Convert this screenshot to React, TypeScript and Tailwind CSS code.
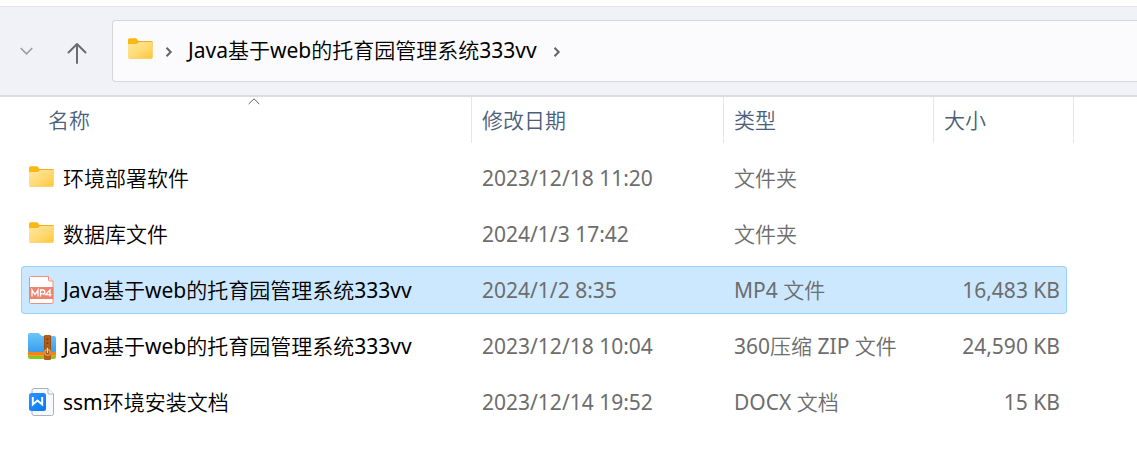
import type { ReactNode } from "react";

type Entry = {
  name: string;
  modified: string;
  type: string;
  size: string;
  icon: ReactNode;
  selected?: boolean;
};

function FolderIcon() {
  return (
    <svg width="26" height="28" viewBox="0 1 26 28" aria-hidden="true" className="shrink-0">
      <defs>
        <linearGradient id="folderFront" x1="0" y1="0" x2="1" y2="1">
          <stop offset="0" stopColor="#ffe69c" />
          <stop offset="0.5" stopColor="#ffdb78" />
          <stop offset="1" stopColor="#ffc637" />
        </linearGradient>
      </defs>
      <path d="M1 5a1.500 1.500 0 0 1 1.500-1.500H9.200L11.500 6H24.600a1.200 1.200 0 0 1 1.200 1.200V12H1Z" fill="#f4ad1f" />
      <path d="M1 5a1.500 1.500 0 0 1 1.500-1.500H9.200L11.200 5.500 9 8.800H1Z" fill="#fcb814" />
      <path d="M1 9h7.700a2.500 2.500 0 0 0 1.800-.8L12 7h13.800v15A1.500 1.500 0 0 1 24.300 23.500H2.500A1.500 1.500 0 0 1 1 22Z" fill="url(#folderFront)" />
      <path d="M1.500 22.900q.4.600 1 .6h21.800q.6 0 1-.6Z" fill="#f5bd3f" />
    </svg>
  );
}

function Mp4Icon() {
  return (
    <svg width="26" height="28" viewBox="0 0 26 28" aria-hidden="true" className="shrink-0">
      <path d="M1.500 1.500a1 1 0 0 1 1-1h18l4.500 4.500v21.500a1 1 0 0 1-1 1h-21.500a1 1 0 0 1-1-1Z" fill="#fff" stroke="#f58e78" />
      <path d="M20.500.5V4a1 1 0 0 0 1 1H25" fill="#ffe5df" stroke="#f58e78" />
      <rect x="1" y="11" width="24.500" height="12" fill="#ef846d" />
      <path
        d="M4 20.500v-6.500l3 4.500 3-4.500v6.500M12.500 20.500v-6.500h2.300a1.900 1.900 0 0 1 0 3.900h-2.300M22 20.500v-6.500l-4.500 4.700h6"
        fill="none"
        stroke="#fff"
        strokeWidth="1.300"
      />
    </svg>
  );
}

function ZipIcon() {
  return (
    <svg width="28" height="28" viewBox="0 0 28 28" aria-hidden="true" className="shrink-0">
      <defs>
        <linearGradient id="zipFront" x1="0" y1="0" x2="0" y2="1">
          <stop offset="0" stopColor="#69c6f8" />
          <stop offset="1" stopColor="#3a9eef" />
        </linearGradient>
      </defs>
      <path d="M0 20h28v4.500a2.500 2.500 0 0 1-2.500 2.500H2.500A2.500 2.500 0 0 1 0 24.500Z" fill="#86c81d" />
      <path d="M0 18h28v4a2 2 0 0 1-2 2H2a2 2 0 0 1-2-2Z" fill="#e8b95a" />
      <path d="M0 17h28v4.500a2 2 0 0 1-2 2H2a2 2 0 0 1-2-2Z" fill="#f58212" />
      <path d="M0 3a2 2 0 0 1 2-2h7.500c1.300 0 1.700.4 2.500 1.300S13.500 4 15 4h11a2 2 0 0 1 2 2v12a2 2 0 0 1-2 2H2a2 2 0 0 1-2-2Z" fill="url(#zipFront)" />
      <rect x="16" y="3" width="7" height="25" rx="1" fill="#b45e18" />
      <path d="M16.500 4v13M22.500 4v13" stroke="#9a4d12" />
      <path d="M19.500 6.500v10" stroke="#74380d" strokeWidth="1.600" strokeDasharray="1.500 2.500" />
      <rect x="17" y="18" width="5" height="5" rx="1" fill="#a55416" stroke="#f3c276" />
      <path d="M19.500 15.500v5.500" stroke="#ffdf9f" strokeWidth="1.200" />
    </svg>
  );
}

function DocIcon() {
  return (
    <svg width="26" height="28" viewBox="0 0 26 28" aria-hidden="true" className="shrink-0">
      <defs>
        <linearGradient id="docBadge" x1="0" y1="0" x2="1" y2="1">
          <stop offset="0" stopColor="#2b95ff" />
          <stop offset="1" stopColor="#0878f4" />
        </linearGradient>
      </defs>
      <path d="M4 2.500a2 2 0 0 1 2-2h14l5.500 5.500v19.500a2 2 0 0 1-2 2H6a2 2 0 0 1-2-2Z" fill="#f8f9fc" stroke="#a9b0bf" />
      <path d="M20 .5V5a1 1 0 0 0 1 1h4.500" fill="#fff" stroke="#a9b0bf" />
      <rect x="1" y="5" width="17" height="18" rx="2.500" fill="url(#docBadge)" />
      <path d="M4.800 9v7.500L9.500 12.500l4.700 4V9" fill="none" stroke="#fff" strokeWidth="1.900" />
    </svg>
  );
}

const entries: Entry[] = [
  { name: "环境部署软件", modified: "2023/12/18 11:20", type: "文件夹", size: "", icon: <FolderIcon /> },
  { name: "数据库文件", modified: "2024/1/3 17:42", type: "文件夹", size: "", icon: <FolderIcon /> },
  {
    name: "Java基于web的托育园管理系统333vv",
    modified: "2024/1/2 8:35",
    type: "MP4 文件",
    size: "16,483 KB",
    icon: <Mp4Icon />,
    selected: true,
  },
  {
    name: "Java基于web的托育园管理系统333vv",
    modified: "2023/12/18 10:04",
    type: "360压缩 ZIP 文件",
    size: "24,590 KB",
    icon: <ZipIcon />,
  },
  { name: "ssm环境安装文档", modified: "2023/12/14 19:52", type: "DOCX 文档", size: "15 KB", icon: <DocIcon /> },
];

function Crumb() {
  return (
    <svg width="8" height="12" viewBox="0 0 8 12" fill="none" stroke="#666" strokeWidth="2" aria-hidden="true" className="mt-1 shrink-0">
      <path d="M1.500 1.800 5.700 6 1.500 10.200" />
    </svg>
  );
}

function AddressBar() {
  return (
    <nav aria-label="地址栏" className="mt-1.5 flex border-t border-[#e4e5e9] border-b-2 border-b-[#dcdde3] bg-[#f0f2f8] py-[13px]">
      <div className="flex w-28 shrink-0 items-center">
        <button type="button" aria-label="最近浏览的位置" className="ml-5">
          <svg width="13" height="8" viewBox="0 0 13 8" fill="none" stroke="#9b9da1" strokeWidth="1.600">
            <path d="M.7 1 6.500 6.800 12.300 1" />
          </svg>
        </button>
        <button type="button" aria-label="上移" className="ml-8 mt-1">
          <svg width="24" height="24" viewBox="0 0 24 24" fill="none" stroke="#6b6c70" strokeWidth="2" strokeLinecap="round" strokeLinejoin="round">
            <path d="M12 22V3M3.500 11.500 12 3l8.500 8.500" />
          </svg>
        </button>
      </div>
      <div className="flex h-[62px] min-w-0 flex-1 items-center rounded-l border border-r-0 border-[#d6d7da] bg-[#fbfbfd] pb-0.5 pl-3.5 text-black">
        <FolderIcon />
        <span className="ml-3 flex"><Crumb /></span>
        <a href="#folder" className="mx-4 -ml-px pl-4 whitespace-nowrap">Java基于web的托育园管理系统333vv</a>
        <Crumb />
      </div>
    </nav>
  );
}

function HeaderCell({ label, first }: { label: string; first?: boolean }) {
  return (
    <th scope="col" className="p-0 pb-[7px] text-left font-normal">
      <div className={first ? "relative ml-4 flex h-[46px] items-center border-r border-[#e5e5e5] pl-[11px]" : "flex h-[46px] items-center border-r border-[#e5e5e5] pl-2.5"}>
        {first && (
          <svg width="12" height="7" viewBox="0 0 12 7" fill="none" stroke="#5c5c5c" aria-hidden="true" className="absolute left-1/2 top-px -translate-x-1/2">
            <path d="M.7 6 6 .8 11.300 6" />
          </svg>
        )}
        {label}
      </div>
    </th>
  );
}

function Row({ entry }: { entry: Entry }) {
  const cell = entry.selected
    ? "flex h-12 items-center border-y border-[#99d1ff] bg-[#cce8ff]"
    : "flex h-12 items-center border-y border-transparent";
  return (
    <tr aria-selected={entry.selected ?? false}>
      <td className="p-0 py-1">
        <div className={`${cell} rounded-l-sm border-l pl-1.5`}>
          <span className="flex w-[35px] shrink-0 justify-start">{entry.icon}</span>
          <span className="whitespace-nowrap text-black">{entry.name}</span>
        </div>
      </td>
      <td className="p-0 py-1"><div className={`${cell} pl-2.5`}>{entry.modified}</div></td>
      <td className="p-0 py-1"><div className={`${cell} pl-2.5`}>{entry.type}</div></td>
      <td className="p-0 py-1 pr-[7px]"><div className={`${cell} justify-end rounded-r-sm border-r pr-1.5`}>{entry.size}</div></td>
    </tr>
  );
}

export default function App() {
  return (
    <main className="min-h-screen overflow-hidden bg-white font-['Noto_Sans','Noto_Sans_CJK_SC_DemiLight','Noto_Sans_CJK_SC',sans-serif] text-[21px] leading-7 text-[#6d6d6d]">
      <AddressBar />
      <table className="ml-[21px] w-[1053px] table-fixed border-separate border-spacing-0">
        <colgroup>
          <col className="w-[451px]" />
          <col className="w-[252px]" />
          <col className="w-[210px]" />
          <col className="w-[140px]" />
        </colgroup>
        <thead className="text-[#4c607a]">
          <tr>
            <HeaderCell label="名称" first />
            <HeaderCell label="修改日期" />
            <HeaderCell label="类型" />
            <HeaderCell label="大小" />
          </tr>
        </thead>
        <tbody>
          {entries.map((entry) => (
            <Row key={entry.name + entry.type} entry={entry} />
          ))}
        </tbody>
      </table>
    </main>
  );
}
